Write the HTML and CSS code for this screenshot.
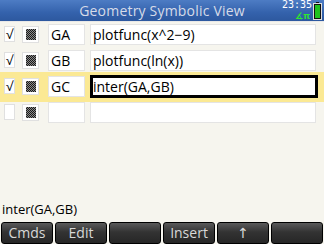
FILE: index.html
```html
<!DOCTYPE html>
<html lang="en">
<head>
    <meta charset="UTF-8">
    <title>Geometry Symbolic View</title>
    <link rel="stylesheet" href="styles.css">
</head>
<body>
    <div class="screen">
        <div class="titlebar">
            <span class="title">Geometry Symbolic View</span>
            <div class="status">
                <span class="clock">23:35</span>
                <span class="mode">∡π</span>
            </div>
            <svg class="battery" width="9" height="18" viewBox="0 0 9 18">
                <rect x="3" y="0" width="3" height="2" fill="#111"/>
                <rect x="0.5" y="1.5" width="8" height="16" fill="#111" stroke="#ddd" stroke-width="1"/>
                <rect x="2" y="3" width="5" height="13" fill="#1fc21f"/>
            </svg>
        </div>

        <div class="list">
            <div class="row">
                <div class="check">√</div>
                <div class="swatch"><span></span></div>
                <div class="name">GA</div>
                <div class="expr">plotfunc(x^2−9)</div>
            </div>
            <div class="row">
                <div class="check">√</div>
                <div class="swatch"><span></span></div>
                <div class="name">GB</div>
                <div class="expr">plotfunc(ln(x))</div>
            </div>
            <div class="row selected">
                <div class="check">√</div>
                <div class="swatch"><span></span></div>
                <div class="name">GC</div>
                <div class="expr active">inter(GA,GB)</div>
            </div>
            <div class="row">
                <div class="check"></div>
                <div class="swatch"><span></span></div>
                <div class="name"></div>
                <div class="expr"></div>
            </div>
        </div>

        <div class="cmdline">inter(GA,GB)</div>

        <div class="menu">
            <button class="key">Cmds</button>
            <button class="key">Edit</button>
            <button class="key"></button>
            <button class="key">Insert</button>
            <button class="key">↑</button>
            <button class="key"></button>
        </div>
    </div>
</body>
</html>
```

FILE: styles.css
```css
body {
    margin: 0;
    background-color: #f6f5ee;
    font-family: 'Open Sans', 'DejaVu Sans', sans-serif;
}

.screen {
    width: 324px;
    height: 244px;
    display: flex;
    flex-direction: column;
    overflow: hidden;
}

.titlebar {
    height: 21px;
    border-bottom: 1px solid #e8e8e8;
    background: linear-gradient(180deg, #4d7cc4, #3462ac 60%, #2d589f);
    display: flex;
    align-items: center;
    justify-content: center;
    position: relative;
}

.title {
    color: #d6dbe8;
    font-size: 14px;
    letter-spacing: 0.2px;
}

.status {
    position: absolute;
    top: 0;
    right: 12px;
    display: flex;
    flex-direction: column;
    align-items: flex-end;
    gap: 1px;
}

.clock {
    color: #fff;
    font-family: 'DejaVu Sans Mono', monospace;
    font-size: 10px;
    line-height: 10px;
}

.mode {
    color: #2ee82e;
    font-size: 9px;
    line-height: 9px;
    font-weight: bold;
    margin-right: 2px;
}

.battery {
    position: absolute;
    top: 2px;
    right: 2px;
}

.list {
    display: flex;
    flex-direction: column;
    padding-top: 2px;
}

.row {
    height: 21px;
    padding: 0 0 5px 4px;
    display: flex;
    align-items: stretch;
}

.row.selected {
    background-color: #fbe994;
    box-shadow: 0 -4px 0 #fbe994;
    height: 24px;
    padding-bottom: 2px;
}

.check {
    width: 11px;
    height: 16px;
    margin-top: 2px;
    margin-right: 7px;
    background: #fff;
    border: 1px solid #e0e0e0;
    box-sizing: border-box;
    font-size: 13px;
    line-height: 14px;
    text-align: center;
    color: #000;
}

.swatch {
    width: 17px;
    height: 17px;
    margin-top: 2px;
    margin-right: 9px;
    background: #fff;
    border: 1px solid #e0e0e0;
    box-sizing: border-box;
    display: flex;
    align-items: center;
    justify-content: center;
}

.swatch span {
    width: 10px;
    height: 11px;
    background-image: repeating-conic-gradient(#1a1a1a 0 25%, #8a8a8a 0 50%);
    background-size: 2px 2px;
}

.name {
    width: 37px;
    height: 21px;
    margin-right: 5px;
    background: #fff;
    border: 1px solid #e4e4e4;
    box-sizing: border-box;
    font-size: 14px;
    line-height: 19px;
    padding-left: 2px;
    color: #000;
}

.expr {
    width: 226px;
    height: 21px;
    background: #fff;
    border: 1px solid #e4e4e4;
    box-sizing: border-box;
    font-size: 14px;
    line-height: 19px;
    padding-left: 2px;
    color: #000;
}

.expr.active {
    width: 228px;
    height: 23px;
    margin-top: -1px;
    border: 3px solid #000;
    line-height: 17px;
    padding-left: 0;
}

.cmdline {
    margin-top: auto;
    padding-left: 2px;
    font-size: 13px;
    line-height: 16px;
    color: #000;
    margin-bottom: 5px;
}

.menu {
    display: flex;
    height: 22px;
}

.key {
    width: 52px;
    margin: 0 1px;
    height: 22px;
    padding: 0;
    border: 1px solid #000;
    border-radius: 3px;
    background: linear-gradient(180deg, #5a5a5a, #333 45%, #262626);
    color: #d8d8d8;
    font-family: 'Open Sans', 'DejaVu Sans', sans-serif;
    font-size: 14px;
    line-height: 20px;
}
```
